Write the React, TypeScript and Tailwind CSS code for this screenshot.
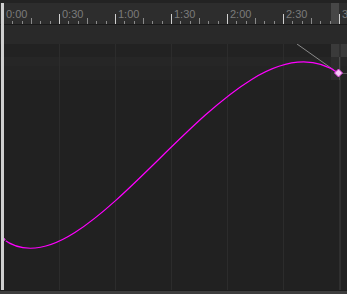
const LABELS = ["0:00", "0:30", "1:00", "1:30", "2:00", "2:30", "3:00"];
const GRID_X = [59, 115, 171, 227, 283];

const Ruler = () => {
  const ticks: { x: number; tall: boolean }[] = [];
  for (let i = 0; i < 42; i++) {
    if (i % 6 === 0) continue;
    ticks.push({ x: 3 + (i * 56) / 6, tall: i % 3 === 0 });
  }
  return (
    <div className="relative h-[21px] bg-[#2d2d2d]">
      <div className="flex h-full pl-[3px]">
        {LABELS.map((label) => (
          <div key={label} className="w-[56px] shrink-0 pl-[3px] pt-[5px] text-[11px] leading-[12px] text-[#7b7b7b]">
            {label}
          </div>
        ))}
      </div>
      <div className="absolute left-[331px] top-0 h-full w-[8px] bg-[#474747]" />
      <svg className="absolute inset-0" width="347" height="21">
        {ticks.map((t) => (
          <line
            key={t.x}
            x1={Math.round(t.x) + 0.5}
            x2={Math.round(t.x) + 0.5}
            y1={t.tall ? 15 : 18}
            y2={21}
            stroke="#8a8a8a"
          />
        ))}
        {[59, 115, 171, 227, 283, 339].map((x) => (
          <line key={x} x1={x + 0.5} x2={x + 0.5} y1={11} y2={21} stroke="#d0d0d0" />
        ))}
      </svg>
    </div>
  );
};

const Plot = () => (
  <div className="relative flex-1 bg-[#212121]">
    <div className="h-[13px] bg-[#222222]" />
    <div className="h-[9px] bg-[#262626]" />
    <div className="h-[14px] bg-[#242424]" />
    <div className="absolute left-[331px] top-0 h-[13px] w-[16px] bg-[#3a3a3a]" />
    <div className="absolute left-[331px] top-[13px] h-[23px] w-[8px] bg-[#2c2c2c]" />
    <svg className="absolute inset-0" width="347" height="246" viewBox="0 44 347 246">
      {GRID_X.map((x) => (
        <line key={x} x1={x + 0.5} x2={x + 0.5} y1={44} y2={290} stroke="#2c2c2c" />
      ))}
      <line x1={340} x2={340} y1={44} y2={290} stroke="#2f2f2f" strokeWidth={2} />
      <line x1={339.5} x2={339.5} y1={57} y2={80} stroke="#4a4a4a" />
      <line x1={341} x2={347} y1={73.5} y2={73.5} stroke="#5a5a5a" />
      <line x1={297} y1={44} x2={338} y2={73} stroke="#8a8a8a" />
      <path
        d="M3 239 C90 305 235.5 0.5 338 73"
        fill="none"
        stroke="#ff00ff"
        strokeWidth={1.2}
      />
      <circle cx={4} cy={239.5} r={2} fill="#d14fd1" stroke="#1a1a1a" strokeWidth={1} />
      <path d="M338.5 69 L342.5 73 L338.5 77 L334.5 73 Z" fill="#f7c8f7" stroke="#e040e0" strokeWidth={1} />
    </svg>
  </div>
);

export default function App() {
  return (
    <div className="relative flex h-[294px] w-[347px] flex-col overflow-hidden bg-[#232323] font-['Liberation_Sans',Arial,sans-serif]">
      <div className="h-[3px] bg-[#232323]" />
      <Ruler />
      <div className="h-[1px] bg-[#1a1a1a]" />
      <div className="h-[19px] bg-[#292929]" />
      <Plot />
      <div className="h-[1px] bg-[#1c1c1c]" />
      <div className="h-[3px] bg-[#3d3d3d]" />
      <div className="absolute left-[1px] top-[3px] h-[287px] w-[3px] bg-[#cfcfcf]" />
    </div>
  );
}
